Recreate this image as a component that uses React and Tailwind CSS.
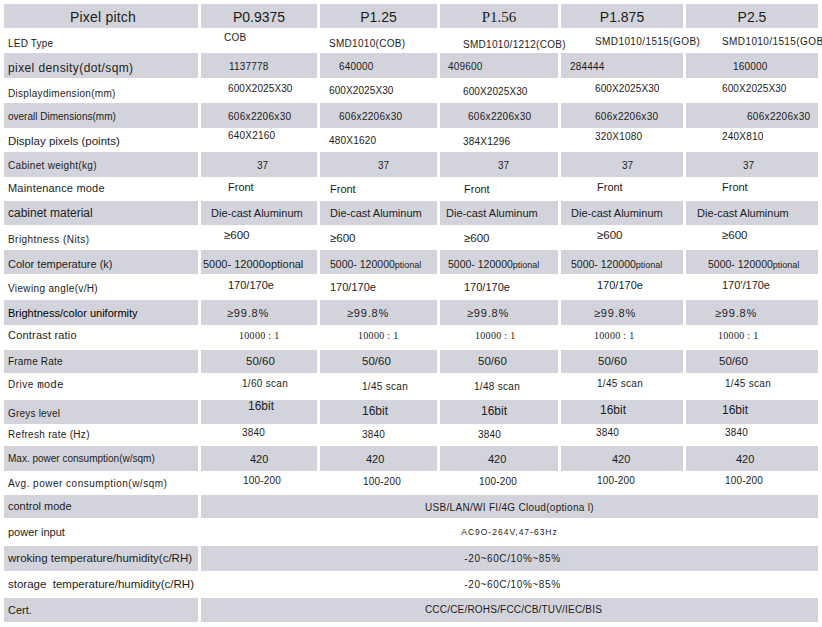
const GRID = "grid grid-cols-[194px_116px_117px_118px_122px_132px] gap-x-[3px]";

const rows = [
  { h: "h-[24px]", g: true, l: ["Pixel pitch", "justify-center text-[14px] tracking-[0.2px] pt-[2px] pl-0"],
    v: "justify-center text-[14px] pt-[2px]",
    c: [["P0.9375", ""], ["P1.25", ""], ["P1.56", "font-['Liberation_Serif',serif] text-[15px]"], ["P1.875", ""], ["P2.5", ""]] },
  { h: "h-[25px]", l: ["LED Type", "text-[10px] tracking-[0.2px] pt-[7px]"],
    v: "text-[10px] tracking-[0.3px]",
    c: [["COB", "pl-[23px] pb-[5px]"], ["SMD1010(COB)", "pl-[9px] pt-[7px] tracking-[0.2px]"], ["SMD1010/1212(COB)", "pl-[23px] pt-[8px] tracking-[0.3px]"], ["SMD1010/1515(GOB)", "pl-[34px] pt-[3px] tracking-[0.4px]"], ["SMD1010/1515(GOB)", "pl-[36px] pt-[3px] tracking-[0.4px]"]] },
  { h: "h-[25px]", g: true, l: ["pixel density(dot/sqm)", "text-[12px] tracking-[0.4px] pt-[5px]"],
    v: "text-[10px] tracking-[0.2px] pt-[2px]",
    c: [["1137778", "pl-[28px]"], ["640000", "pl-[19px]"], ["409600", "pl-[8px]"], ["284444", "pl-[9px]"], ["160000", "pl-[47px]"]] },
  { h: "h-[25px]", l: ["Displaydimension(mm)", "text-[10px] tracking-[0.3px] pt-[7px]"],
    v: "text-[10px] tracking-[0.1px]",
    c: [["600X2025X30", "pl-[27px] pb-[3px]"], ["600X2025X30", "pl-[9px] pt-[1px]"], ["600X2025X30", "pl-[23px] pt-[3px]"], ["600X2025X30", "pl-[34px] pb-[3px]"], ["600X2025X30", "pl-[36px] pb-[3px]"]] },
  { h: "h-[25px]", g: true, l: ["overall Dimensions(mm)", "text-[10px] pt-[3px]"],
    v: "text-[10px] tracking-[0.3px] pt-[3px]",
    c: [["606x2206x30", "pl-[27px]"], ["606x2206x30", "pl-[19px]"], ["606x2206x30", "pl-[28px]"], ["606x2206x30", "pl-[34px]"], ["606x2206x30", "pl-[61px]"]] },
  { h: "h-[24px]", l: ["Display pixels (points)", "text-[11.5px] pt-[4px]"],
    v: "text-[10px] tracking-[0.2px]",
    c: [["640X2160", "pl-[27px] pb-[8px]"], ["480X1620", "pl-[9px] pt-[2px]"], ["384X1296", "pl-[23px] pt-[4px]"], ["320X1080", "pl-[34px] pb-[6px]"], ["240X810", "pl-[36px] pb-[6px]"]] },
  { h: "h-[25px]", g: true, l: ["Cabinet weight(kg)", "text-[10px] tracking-[0.3px] pt-[3px]"],
    v: "text-[10px] pt-[3px]",
    c: [["37", "pl-[56px]"], ["37", "pl-[58px]"], ["37", "pl-[58px]"], ["37", "pl-[61px]"], ["37", "pl-[57px]"]] },
  { h: "h-[24px]", l: ["Maintenance mode", "text-[11px] tracking-[0.2px] pb-[2px]"],
    v: "text-[11px]",
    c: [["Front", "pl-[27px] pb-[4px]"], ["Front", "pl-[10px]"], ["Front", "pl-[24px]"], ["Front", "pl-[36px] pb-[4px]"], ["Front", "pl-[36px] pb-[4px]"]] },
  { h: "h-[24px]", g: true, l: ["cabinet material", "text-[12px]"],
    v: "text-[11px]",
    c: [["Die-cast Aluminum", "pl-[10px]"], ["Die-cast Aluminum", "pl-[10px]"], ["Die-cast Aluminum", "pl-[6px]"], ["Die-cast Aluminum", "pl-[10px]"], ["Die-cast Aluminum", "pl-[11px]"]] },
  { h: "h-[25px]", l: ["Brightness (Nits)", "text-[10px] tracking-[0.45px] pt-[5px]"],
    v: "text-[11.5px]",
    c: [["≥600", "pl-[23px] pb-[3px]"], ["≥600", "pl-[10px] pt-[3px]"], ["≥600", "pl-[24px] pt-[3px]"], ["≥600", "pl-[36px] pb-[3px]"], ["≥600", "pl-[36px] pb-[3px]"]] },
  { h: "h-[24px]", g: true, l: ["Color temperature (k)", "text-[11px] pt-[4px]"],
    v: "text-[10.5px] pt-[4px]",
    c: [["5000- 12000optional", "pl-[2px] text-[11px]"], ["CT", "pl-[10px]"], ["CT", "pl-[8px]"], ["CT", "pl-[10px]"], ["CT", "pl-[22px]"]] },
  { h: "h-[26px]", l: ["Viewing angle(v/H)", "text-[10px] tracking-[0.35px] pt-[4px]"],
    v: "text-[11px]",
    c: [["170/170e", "pl-[27px] pb-[4px]"], ["170/170e", "pl-[10px]"], ["170/170e", "pl-[24px]"], ["170/170e", "pl-[36px] pb-[4px]"], ["170'/170e", "pl-[36px] pb-[4px]"]] },
  { h: "h-[25px]", g: true, l: ["Brightness/color uniformity", "text-[11px] text-black pt-[1px]"],
    v: "text-[11px] tracking-[0.8px] pt-[1px]",
    c: [["≥99.8%", "pl-[26px]"], ["≥99.8%", "pl-[27px]"], ["≥99.8%", "pl-[27px]"], ["≥99.8%", "pl-[33px]"], ["≥99.8%", "pl-[29px]"]] },
  { h: "h-[25px]", l: ["Contrast ratio", "text-[11px] tracking-[0.2px] pb-[5px]"],
    v: "font-['Liberation_Serif',serif] text-[10px] tracking-[0.3px] pb-[3px]",
    c: [["10000 : 1", "pl-[38px]"], ["10000 : 1", "pl-[38px]"], ["10000 : 1", "pl-[35px]"], ["10000 : 1", "pl-[33px]"], ["10000 : 1", "pl-[32px]"]] },
  { h: "h-[23px]", g: true, l: ["Frame Rate", "text-[10px] tracking-[0.2px]"],
    v: "text-[11.5px]",
    c: [["50/60", "pl-[45px]"], ["50/60", "pl-[42px]"], ["50/60", "pl-[38px]"], ["50/60", "pl-[37px]"], ["50/60", "pl-[33px]"]] },
  { h: "h-[27px]", l: ["DRIVE", "pb-[3px]"],
    v: "text-[10px] tracking-[0.3px]",
    c: [["1/60 scan", "pl-[41px] pb-[5px]"], ["1/45 scan", "pl-[42px] pt-[1px]"], ["1/48 scan", "pl-[34px] pt-[1px]"], ["1/45 scan", "pl-[36px] pb-[5px]"], ["1/45 scan", "pl-[39px] pb-[5px]"]] },
  { h: "h-[24px]", g: true, l: ["Greys level", "text-[10px] tracking-[0.2px] pt-[4px]"],
    v: "text-[12px]",
    c: [["16bit", "pl-[47px] pb-[12px] text-[11px]"], ["16bit", "pl-[42px] pb-[2px]"], ["16bit", "pl-[41px] pb-[2px]"], ["16bit", "pl-[39px] pb-[4px]"], ["16bit", "pl-[36px] pb-[4px]"]] },
  { h: "h-[22px]", l: ["Refresh rate (Hz)", "text-[10px] tracking-[0.3px]"],
    v: "text-[10px] tracking-[0.2px]",
    c: [["3840", "pl-[41px] pb-[5px]"], ["3840", "pl-[42px] pb-[1px]"], ["3840", "pl-[38px] pb-[1px]"], ["3840", "pl-[35px] pb-[5px]"], ["3840", "pl-[39px] pb-[5px]"]] },
  { h: "h-[25px]", g: true, l: ["Max. power consumption(w/sqm)", "text-[10px] pt-[1px]"],
    v: "text-[11px] pt-[1px]",
    c: [["420", "pl-[49px]"], ["420", "pl-[46px]"], ["420", "pl-[48px]"], ["420", "pl-[51px]"], ["420", "pl-[50px]"]] },
  { h: "h-[24px]", l: ["Avg. power consumption(w/sqm)", "text-[10px] tracking-[0.5px] pt-[2px]"],
    v: "text-[10px] tracking-[0.2px]",
    c: [["100-200", "pl-[42px] pb-[4px]"], ["100-200", "pl-[43px] pb-[2px]"], ["100-200", "pl-[39px] pb-[2px]"], ["100-200", "pl-[36px] pb-[4px]"], ["100-200", "pl-[39px] pb-[4px]"]] },
  { h: "h-[23px]", g: true, l: ["control mode", "text-[11px]"],
    s: ["USB/LAN/WI FI/4G Cloud(optiona l)", "text-[10px] tracking-[0.3px] pt-[2px]"] },
  { h: "h-[28px]", l: ["power input", "text-[11px]"],
    s: ["AC9O-264V,47-63Hz", "text-[8.5px] tracking-[1px]"] },
  { h: "h-[25px]", g: true, l: ["wroking temperature/humidity(c/RH)", "text-[11.5px]"],
    s: ["-20~60C/10%~85%", "text-[10px] tracking-[0.6px] pl-[6px]"] },
  { h: "h-[27px]", l: ["storage  temperature/humidity(c/RH)", "text-[11.5px] whitespace-pre"],
    s: ["-20~60C/10%~85%", "text-[10px] tracking-[0.6px] pl-[6px]"] },
  { h: "h-[24px]", g: true, l: ["Cert.", "text-[11px]"],
    s: ["CCC/CE/ROHS/FCC/CB/TUV/IEC/BIS", "text-[10px] tracking-[0.2px] pl-[8px]"] },
];

function CellText({ t }) {
  if (t === "CT") {
    return (
      <span>
        5000- 120000<span className="text-[9px]">ptional</span>
      </span>
    );
  }
  if (t === "DRIVE") {
    return (
      <span className="text-[10px] tracking-[0.5px]">
        Drive <span className="font-['Liberation_Mono',monospace] text-[11px] tracking-normal">mode</span>
      </span>
    );
  }
  return <span>{t}</span>;
}

export default function App() {
  return (
    <div className="w-[822px] h-[627px] overflow-hidden bg-white pt-[4px] pl-[4px] text-[#1c1c1c] font-['Liberation_Sans',Arial,sans-serif] leading-none">
      {rows.map((r, i) => {
        const bg = r.g ? "bg-[#d3d4db]" : "bg-transparent";
        return (
          <div key={i} className={`${GRID} ${r.h}`}>
            <div className={`flex items-center whitespace-nowrap pl-[4px] ${bg} ${r.l[1]}`}>
              <CellText t={r.l[0]} />
            </div>
            {r.s ? (
              <div className={`col-span-5 flex items-center justify-center whitespace-nowrap ${bg} ${r.s[1]}`}>
                <span>{r.s[0]}</span>
              </div>
            ) : (
              r.c.map((c, j) => (
                <div key={j} className={`flex items-center whitespace-nowrap ${bg} ${r.v} ${c[1]}`}>
                  <CellText t={c[0]} />
                </div>
              ))
            )}
          </div>
        );
      })}
    </div>
  );
}
